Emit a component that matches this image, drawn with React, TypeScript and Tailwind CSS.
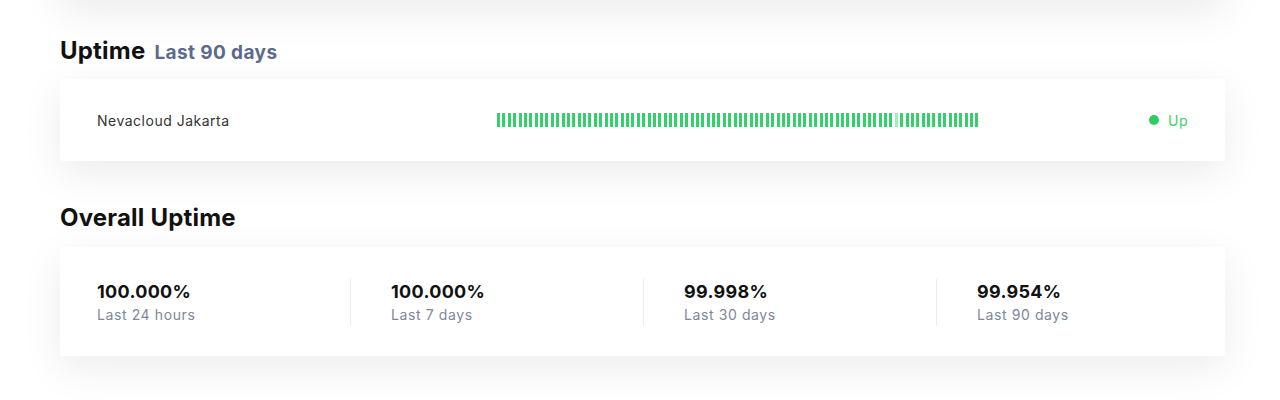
import * as React from "react";

const stats = [
    {value: "100.000%", label: "Last 24 hours"},
    {value: "100.000%", label: "Last 7 days"},
    {value: "99.998%", label: "Last 30 days"},
    {value: "99.954%", label: "Last 90 days"},
];

// 90 days, one of them with a short outage
const days = Array.from({length: 90}, (_, i) => (i === 74 ? "partial" : "up"));

const cardShadow = "shadow-[0_12px_40px_rgba(0,0,0,0.08)]";

export default function App() {
    return (
        <div className="min-h-[400px] bg-white overflow-hidden" style={{fontFamily: "Inter, 'Open Sans', sans-serif"}}>
            <div className="ml-[60px] mr-[55px]">
                {/* tail of the card above */}
                <div className={`h-[60px] -mt-[60px] bg-white ${cardShadow}`}/>

                <h2 className="mt-[36px] h-[30px] flex items-baseline gap-[9px] text-[24px] font-bold text-[#111] leading-[30px] tracking-[0.2px]">
                    Uptime
                    <span className="text-[19px] text-[#5b6b8c] tracking-[0.4px]">Last 90 days</span>
                </h2>

                <div className={`mt-[13px] h-[82px] bg-white rounded-[3px] flex items-center px-[37px] ${cardShadow}`}>
                    <div className="w-[400px] text-[14px] text-[#333] tracking-[0.5px]">Nevacloud Jakarta</div>
                    <div className="w-[482px] flex justify-between">
                        {days.map((d, i) => (
                            <div key={i}
                                 className={d === "up" ? "w-[3px] h-[14px] bg-[#34d06c]" : "w-[3px] h-[14px] bg-[#a8ebbd]"}/>
                        ))}
                    </div>
                    <div className="flex-1 flex justify-end items-center gap-[9px]">
                        <span className="w-[10px] h-[10px] rounded-full bg-[#2ecc63]"/>
                        <span className="text-[14px] text-[#3ccf6c] tracking-[0.5px]">Up</span>
                    </div>
                </div>

                <h2 className="mt-[42px] h-[30px] text-[24px] font-bold text-[#111] leading-[30px] tracking-[0.2px]">Overall Uptime</h2>

                <div className={`mt-[14px] h-[109px] bg-white rounded-[3px] grid grid-cols-[290px_293px_293px_1fr] items-center ${cardShadow}`}>
                    {stats.map((s, i) => (
                        <div key={i}
                             className={i === 0 ? "pl-[37px] pt-[3px] h-[46px] flex flex-col justify-center" : "pl-[40px] pt-[3px] h-[46px] flex flex-col justify-center border-l border-[#ececec]"}>
                            <div className="text-[18px] font-bold text-[#111] leading-[22px] tracking-[0.3px]">{s.value}</div>
                            <div className="mt-[2px] text-[14px] text-[#7d879a] leading-[20px] tracking-[0.6px]">{s.label}</div>
                        </div>
                    ))}
                </div>
            </div>
        </div>
    );
}
